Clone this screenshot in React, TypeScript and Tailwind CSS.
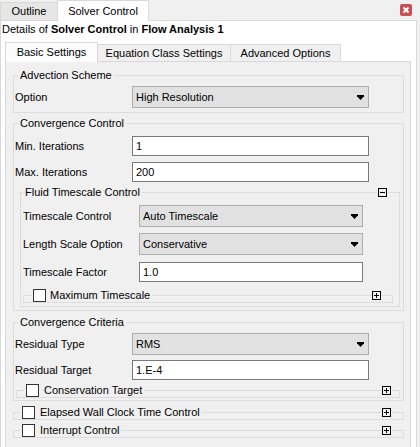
import React from "react"

function Arrow() {
  return (
    <svg width="7" height="5" viewBox="0 0 7 5" className="ml-auto mr-[4px] shrink-0">
      <path d="M0 0H7V1.2L3.5 5L0 1.2Z" fill="#000" />
    </svg>
  )
}

function Toggle({ open }: { open?: boolean }) {
  return (
    <svg width="9" height="9" viewBox="0 0 9 9" shapeRendering="crispEdges">
      <rect x="0.5" y="0.5" width="8" height="8" fill="none" stroke="#000" />
      <path d="M2 4.5H7" stroke="#000" />
      {!open && <path d="M4.5 2V7" stroke="#000" />}
    </svg>
  )
}

function Check() {
  return <span className="inline-block h-[13px] w-[13px] shrink-0 border border-[#333] bg-white" />
}

function Select({ value, w }: { value: string; w: string }) {
  return (
    <div className={`flex h-[22px] items-center border border-[#adadad] bg-[#e1e1e1] pl-[3px] ${w}`}>
      <span>{value}</span>
      <Arrow />
    </div>
  )
}

function Input({ value, w }: { value: string; w: string }) {
  return (
    <div className={`flex h-[20px] items-center border border-[#7a7a7a] bg-white pl-[3px] ${w}`}>
      {value}
    </div>
  )
}

function Row({ label, lab, className, children }: { label: string; lab: string; className?: string; children: React.ReactNode }) {
  return (
    <div className={`flex items-center ${className ?? ""}`}>
      <span className={`shrink-0 ${lab}`}>{label}</span>
      {children}
    </div>
  )
}

type GroupProps = {
  title: React.ReactNode
  titleClass: string
  toggle?: "plus" | "minus"
  toggleClass?: string
  className?: string
  children?: React.ReactNode
}

function Group({ title, titleClass, toggle, toggleClass, className, children }: GroupProps) {
  return (
    <div className={`border border-[#dcdcdc] ${className ?? ""}`}>
      <div className="-mt-[8px] flex h-[14px] items-center">
        <span className={`flex items-center bg-[#f0f0f0] px-[2px] leading-[14px] ${titleClass}`}>{title}</span>
        {toggle && (
          <span className={`ml-auto flex bg-[#f0f0f0] px-[1px] ${toggleClass ?? ""}`}>
            <Toggle open={toggle === "minus"} />
          </span>
        )}
      </div>
      {children}
    </div>
  )
}

function CheckTitle({ label, gap }: { label: string; gap: string }) {
  return (
    <>
      <Check />
      <span className={gap}>{label}</span>
    </>
  )
}

export default function App() {
  const top = "w-[118px] pl-[1px]"
  const inner = "w-[118px] pl-[2px]"
  return (
    <div className="h-[447px] w-[420px] overflow-hidden bg-[#f0f0f0] font-['Liberation_Sans',Arial,sans-serif] text-[11px] text-black">
      {/* window tabs */}
      <div className="flex h-[20px] items-start">
        <div className="mt-[2px] flex h-[18px] w-[57px] items-center justify-center border-l border-t border-[#d9d9d9] bg-[#e6e6e6]">
          Outline
        </div>
        <div className="relative z-10 flex h-[21px] w-[92px] items-center justify-center border-x border-t border-[#d9d9d9] bg-white">
          Solver Control
        </div>
        <div className="ml-auto mr-[8px] mt-[4px] flex h-[12px] w-[12px] items-center justify-center rounded-[2px] bg-[#c75050]">
          <svg width="8" height="8" viewBox="0 0 8 8">
            <path d="M1.5 1.5L6.5 6.5M6.5 1.5L1.5 6.5" stroke="#fff" strokeWidth="2" />
          </svg>
        </div>
      </div>

      <div className="w-[417px] border-x border-t border-[#d9d9d9] bg-white">
        <div className="mt-[1px] pl-[1px] leading-[14px]">
          Details of <b>Solver Control</b> in <b>Flow Analysis 1</b>
        </div>

        {/* settings tabs */}
        <div className="ml-[4px] mt-[6px] flex h-[19px] items-start">
          <div className="relative z-10 flex h-[20px] w-[93px] items-center justify-center border-x border-t border-[#d9d9d9] bg-[#fcfcfc]">
            Basic Settings
          </div>
          <div className="mt-[2px] flex h-[17px] w-[133px] items-center justify-center border-r border-t border-[#d9d9d9] bg-[#f0f0f0]">
            Equation Class Settings
          </div>
          <div className="mt-[2px] flex h-[17px] w-[110px] items-center justify-center border-r border-t border-[#d9d9d9] bg-[#f0f0f0]">
            Advanced Options
          </div>
        </div>

        <div className="ml-[4px] w-[406px] border border-[#d9d9d9] bg-[#f0f0f0] pb-[20px] pl-[7px] pr-[6px]">
          <Group className="mt-[13px]" title="Advection Scheme" titleClass="ml-[4px]">
            <div className="pb-[4px] pt-[4px]">
              <Row label="Option" lab={top}>
                <Select value="High Resolution" w="w-[237px]" />
              </Row>
            </div>
          </Group>

          <Group className="mt-[10px]" title="Convergence Control" titleClass="ml-[4px]">
            <div className="pb-[3px] pt-[6px]">
              <Row label="Min. Iterations" lab={top}>
                <Input value="1" w="w-[237px]" />
              </Row>
              <Row label="Max. Iterations" lab={top} className="mt-[6px]">
                <Input value="200" w="w-[237px]" />
              </Row>

              <Group
                className="ml-[6px] mr-[3px] mt-[10px]"
                title="Fluid Timescale Control"
                titleClass="ml-[2px]"
                toggle="minus"
                toggleClass="mr-[11px]"
              >
                <div className="pb-[3px] pt-[6px]">
                  <Row label="Timescale Control" lab={inner}>
                    <Select value="Auto Timescale" w="w-[224px]" />
                  </Row>
                  <Row label="Length Scale Option" lab={inner} className="mt-[6px]">
                    <Select value="Conservative" w="w-[224px]" />
                  </Row>
                  <Row label="Timescale Factor" lab={inner} className="mt-[7px]">
                    <Input value="1.0" w="w-[224px]" />
                  </Row>
                  <Group
                    className="ml-[2px] mr-[6px] mt-[13px]"
                    title={<CheckTitle label="Maximum Timescale" gap="ml-[4px]" />}
                    titleClass="ml-[7px]"
                    toggle="plus"
                    toggleClass="mr-[10px]"
                  />
                </div>
              </Group>
            </div>
          </Group>

          <Group className="mt-[11px]" title="Convergence Criteria" titleClass="ml-[4px]">
            <div className="pb-[2px] pt-[4px]">
              <Row label="Residual Type" lab={top}>
                <Select value="RMS" w="w-[237px]" />
              </Row>
              <Row label="Residual Target" lab={top} className="mt-[5px]">
                <Input value="1.E-4" w="w-[237px]" />
              </Row>
              <Group
                className="ml-[2px] mr-[3px] mt-[10px]"
                title={<CheckTitle label="Conservation Target" gap="ml-[5px]" />}
                titleClass="ml-[7px]"
                toggle="plus"
                toggleClass="mr-[7px]"
              />
            </div>
          </Group>

          <Group
            className="mt-[11px]"
            title={<CheckTitle label="Elapsed Wall Clock Time Control" gap="ml-[5px]" />}
            titleClass="ml-[6px]"
            toggle="plus"
            toggleClass="mr-[11px]"
          />
          <Group
            className="mt-[10px]"
            title={<CheckTitle label="Interrupt Control" gap="ml-[5px]" />}
            titleClass="ml-[6px]"
            toggle="plus"
            toggleClass="mr-[11px]"
          />
        </div>
      </div>
    </div>
  )
}
